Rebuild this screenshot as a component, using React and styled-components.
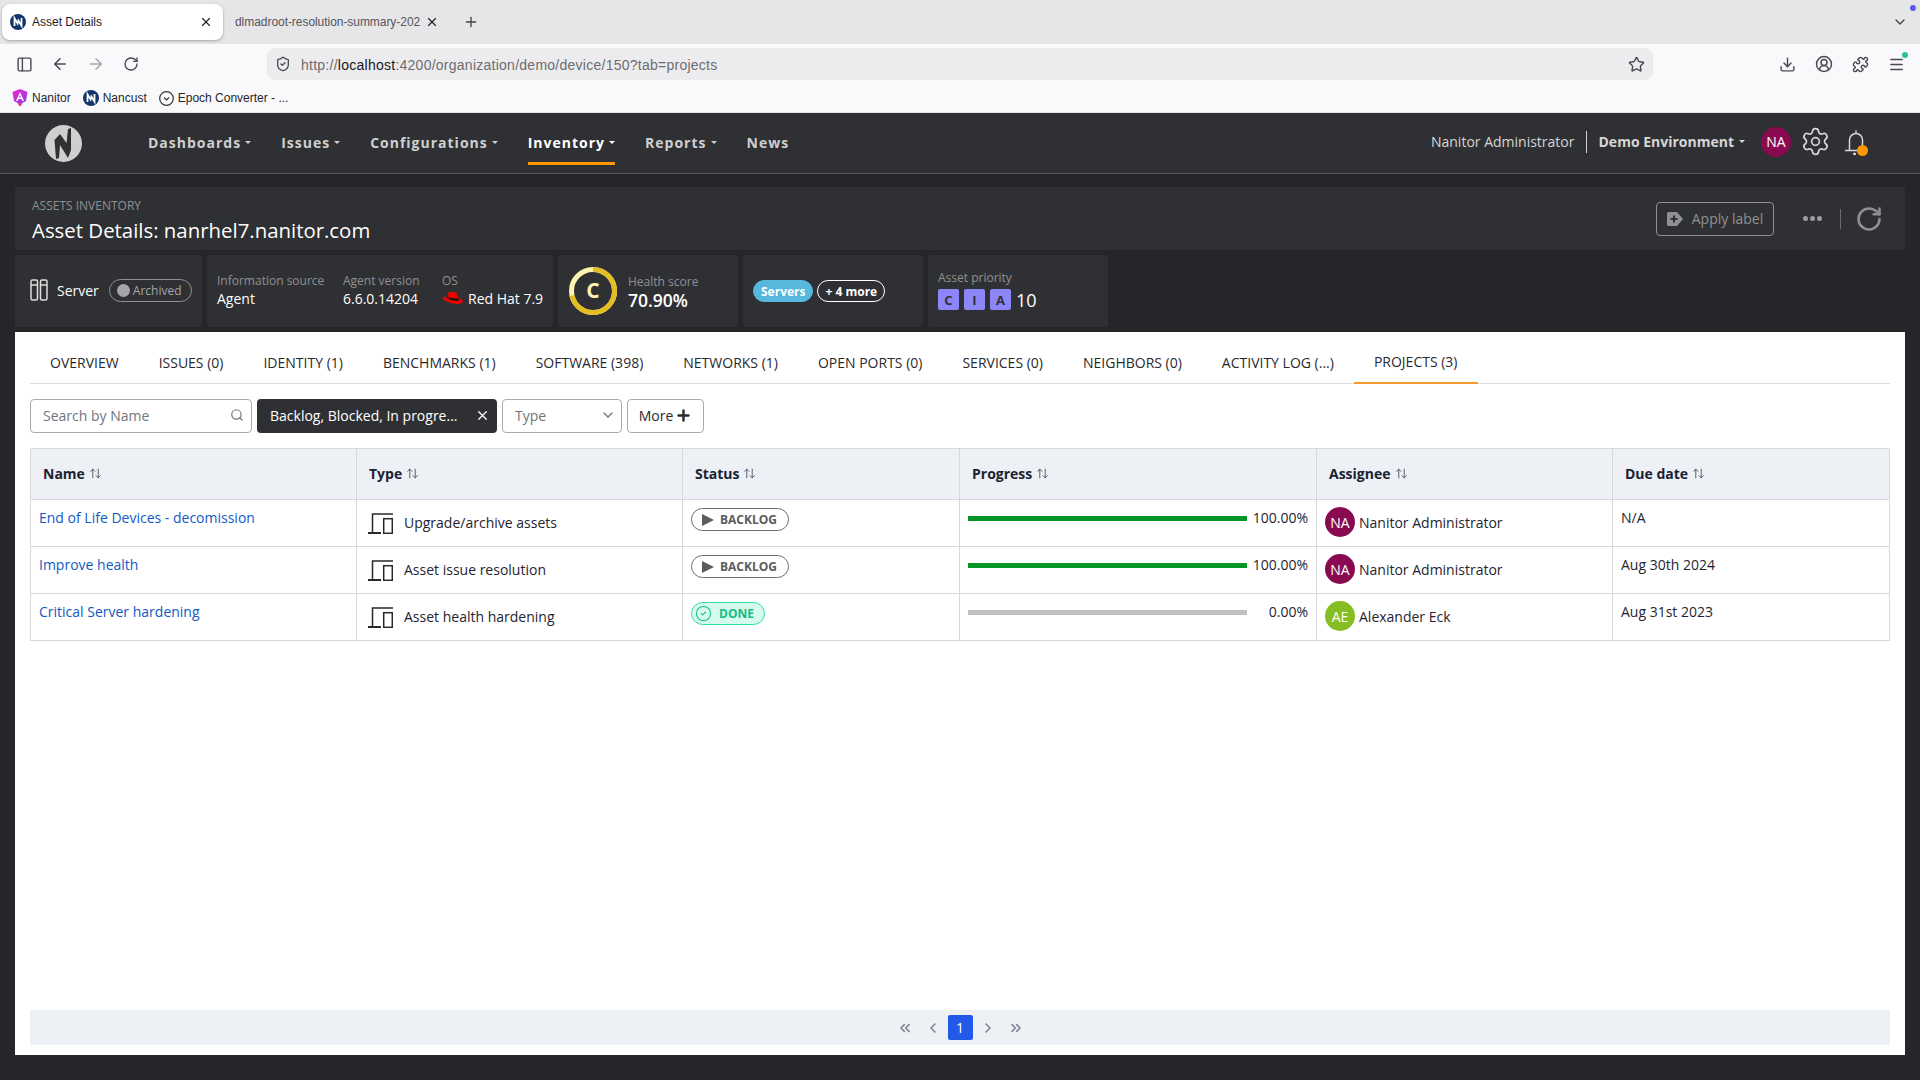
import React from 'react';
import styled, { createGlobalStyle } from 'styled-components';
import { X, Plus, PanelLeft, ArrowLeft, ArrowRight, RotateCw, ShieldCheck, Star, Download, CircleUserRound, Puzzle, Menu, ChevronDown, Search, Settings, ChevronsLeft, ChevronLeft, ChevronRight, ChevronsRight, CircleCheck, ArrowUpDown } from 'lucide-react';

const Global = createGlobalStyle`
  html, body { margin: 0; padding: 0; background: #25262a; }
  body { font-family: "Open Sans", "Noto Sans", sans-serif; font-size: 14px; color: #1f2430; }
  * { box-sizing: border-box; }
`;

const Page = styled.div`width: 1920px; height: 1080px; display: flex; flex-direction: column; overflow: hidden; background: #25262a;`;

const TabStrip = styled.div`height: 44px; background: #e6e6e9; display: flex; align-items: flex-start; padding: 4px 2px 0; position: relative; flex: none;`;
const BrowserTab = styled.div`
  width: ${p => p.$w}px; height: 36px; border-radius: 8px; display: flex; align-items: center; justify-content: center; padding: 0 10px 0 ${p => p.$active ? 8 : 12}px;
  gap: ${p => p.$active ? 6 : 0}px; font-size: 12px; font-family: "Liberation Sans", sans-serif;
  color: ${p => p.$active ? '#1b1b1f' : '#55555a'};
  background: ${p => p.$active ? '#fff' : 'transparent'};
  box-shadow: ${p => p.$active ? '0 1px 3px rgba(0,0,0,.3)' : 'none'};
`;
const TabTitle = styled.span`flex: 1; white-space: nowrap; letter-spacing: ${p => p.$tight ? -0.05 : 0}px;`;
const StripEnd = styled.div`margin-left: auto; padding: 10px 10px 0 0; color: #444; display: flex;`;
const NotifyDot = styled.span`position: absolute; top: 5px; right: 4px; width: 6px; height: 6px; border-radius: 50%; background: #5b5bf0;`;

const Toolbar = styled.div`height: 40px; background: #f9f9fb; display: flex; align-items: center; padding-left: 16px; flex: none; color: #4a4a50;`;
const ToolIcons = styled.div`display: flex; align-items: center; gap: 18px; width: 251px; flex: none;`;
const UrlBar = styled.div`width: 1386px; height: 32px; border-radius: 8px; background: #ececee; display: flex; align-items: center; padding: 0 8px; gap: 10px; flex: none; font-size: 14px; font-family: "Liberation Sans", sans-serif; color: #6c6c72;`;
const UrlText = styled.span`flex: 1; letter-spacing: .255px; padding-top: 1px; b { color: #18181b; font-weight: 400; }`;
const ToolRight = styled.div`display: flex; align-items: center; gap: 19px; margin-left: 126px; position: relative;`;
const GreenDot = styled.span`position: absolute; right: -3px; top: -3px; width: 6px; height: 6px; border-radius: 50%; background: #2cc39a;`;

const Bookmarks = styled.div`height: 29px; background: #f9f9fb; border-bottom: 1px solid #e4e4e6; display: flex; align-items: center; padding-left: 12px; gap: 12px; flex: none; font-size: 12px; font-family: "Liberation Sans", sans-serif; color: #26262b;`;
const Bookmark = styled.span`display: flex; align-items: center; gap: 4px;`;

const TopNav = styled.div`height: 61px; background: #2f3033; border-bottom: 1px solid #56575a; display: flex; align-items: center; padding-left: 45px; flex: none;`;
const NavLinks = styled.div`display: flex; margin-left: 66px; gap: 30px; height: 100%;`;
const NavLink = styled.div`
  display: flex; align-items: center; gap: 3px; height: 100%; position: relative; font-weight: 700; font-size: 14px; letter-spacing: 1px; padding-bottom: 2px;
  color: ${p => p.$active ? '#fff' : '#cfcfcf'};
  &::after { content: ''; display: ${p => p.$active ? 'block' : 'none'}; position: absolute; left: 0; right: 0; bottom: 8px; height: 3px; background: #ff9800; }
`;
const Caret = styled.span`width: 0; height: 0; border-left: 3.5px solid transparent; border-right: 3.5px solid transparent; border-top: 3.5px solid currentColor; margin-left: 1px;`;
const NavRight = styled.div`margin-left: auto; display: flex; align-items: center; color: #d6d6d6; padding: 0 49px 3px 0;`;
const UserName = styled.span`padding-right: 11px; border-right: 1px solid #d0d0d0; line-height: 22px;`;
const EnvName = styled.span`display: flex; align-items: center; gap: 4px; font-weight: 700; margin: 0 16px 0 12px;`;
const Avatar = styled.span`
  width: ${p => p.$s}px; height: ${p => p.$s}px; border-radius: 50%; background: ${p => p.$c}; color: #fff; display: inline-flex; align-items: center; justify-content: center; flex: none; font-size: 14px;
`;
const GearWrap = styled.span`display: flex; margin: 0 14px 0 9px;`;
const BellWrap = styled.span`position: relative; display: flex;`;
const BellDot = styled.span`position: absolute; left: 12px; top: 16px; width: 11px; height: 11px; border-radius: 50%; background: #ff9800;`;

const Main = styled.div`flex: 1; padding: 13px 15px 25px; display: flex; flex-direction: column; min-height: 0;`;
const HeaderPanel = styled.div`height: 63px; background: #2f3033; display: flex; align-items: center; justify-content: space-between; padding: 0 22px 0 17px; flex: none;`;
const TitleBlock = styled.div`padding-top: 4px;`;
const Crumb = styled.div`font-size: 12px; color: #8f9093; line-height: 16px;`;
const Title = styled.div`font-size: 20.4px; color: #fff; line-height: 28px; font-weight: 500; margin-top: 2px;`;
const Actions = styled.div`display: flex; align-items: center; color: #8f9093;`;
const ApplyBtn = styled.div`width: 118px; height: 34px; border: 1px solid #8f9093; border-radius: 4px; display: flex; align-items: center; justify-content: center; gap: 9px; margin-right: 29px;`;
const Dots = styled.span`display: flex; gap: 2px; span { width: 5px; height: 5px; border-radius: 50%; background: #9a9b9e; }`;
const VSep = styled.span`width: 1px; height: 20px; background: #6a6b6e; margin: 0 14px 0 18px;`;

const Cards = styled.div`display: flex; gap: 5px; margin-top: 5px; height: 72px; flex: none;`;
const Card = styled.div`width: ${p => p.$w}px; background: #2f3033; border-radius: 3px; display: flex; align-items: center; padding: 0 0 ${p => p.$pb ?? 0}px ${p => p.$pl ?? 10}px; color: #fff; gap: ${p => p.$gap ?? 0}px;`;
const Field = styled.div`display: flex; flex-direction: column; width: ${p => p.$w}px; flex: none;`;
const FieldLabel = styled.span`font-size: 12px; color: #8f9093; line-height: ${p => p.$lh ?? 18}px; white-space: nowrap;`;
const FieldValue = styled.span`font-size: 14px; color: #fff; line-height: 20px; margin-top: -1px; display: flex; align-items: center; gap: 5px; white-space: nowrap;`;
const ServerLabel = styled.span`margin-left: 9px;`;
const ArchivedPill = styled.span`width: 83px; height: 23px; border: 1px solid #8f9093; border-radius: 12px; display: flex; align-items: center; gap: 3px; padding-left: 7px; font-size: 12px; color: #a5a6a8; margin-left: 10px; i { width: 13px; height: 13px; border-radius: 50%; background: #a5a6a8; }`;
const HealthText = styled.span`font-size: 17.5px; font-weight: 600; color: #fff; line-height: 20px; margin-top: -1px;`;
const Tag = styled.span`height: 22px; border-radius: 11px; padding: 0 7px; display: inline-flex; align-items: center; font-size: 12px; font-weight: 700; color: #fff; background: ${p => p.$fill ? '#55b8dc' : 'transparent'}; border: 1px solid ${p => p.$fill ? '#55b8dc' : '#fff'};`;
const Cia = styled.div`display: flex; align-items: center; gap: 5px; margin-top: 2px;`;
const CiaBox = styled.span`width: 21px; height: 21px; border-radius: 2px; background: #8c86f8; color: #2f3033; font-size: 13px; font-weight: 700; display: flex; align-items: center; justify-content: center;`;
const CiaNum = styled.span`font-size: 18px;`;

const Content = styled.div`flex: 1; background: #fff; margin-top: 5px; padding: 0 15px 10px; display: flex; flex-direction: column; min-height: 0;`;
const Tabs = styled.div`height: 52px; border-bottom: 1px solid #dcdcdc; display: flex; flex: none;`;
const TabItem = styled.div`
  padding: 8px 20px 0; display: flex; align-items: center; color: #2a2a2e; white-space: nowrap; height: 52px;
  border-bottom: ${p => p.$active ? '2px solid #f39a2d' : 'none'};
`;
const Filters = styled.div`display: flex; gap: 5px; margin-top: 15px; height: 34px; flex: none;`;
const SearchBox = styled.div`width: 222px; border: 1px solid #a9abaf; border-radius: 4px; display: flex; align-items: center; justify-content: space-between; padding: 0 7px 2px 12px; color: #72757a;`;
const StatusFilter = styled.div`width: 240px; background: #2f3033; border-radius: 4px; color: #fff; display: flex; align-items: center; justify-content: space-between; padding: 0 7px 2px 13px;`;
const TypeFilter = styled.div`width: 120px; border: 1px solid #a9abaf; border-radius: 4px; display: flex; align-items: center; justify-content: space-between; padding: 0 5px 2px 12px; color: #72757a;`;
const MoreBtn = styled.div`width: 77px; border: 1px solid #a9abaf; border-radius: 4px; display: flex; align-items: center; justify-content: center; gap: 2px; color: #2a2a2e; padding-bottom: 1px;`;

const Table = styled.table`width: 1859px; margin-top: 15px; border-collapse: collapse; table-layout: fixed; flex: none;`;
const Th = styled.th`height: 51px; background: #edf0f5; border: 1px solid #d6d8db; text-align: left; padding: 0 12px 2px; font-weight: 700; color: #1a2233; font-size: 14px;`;
const SortWrap = styled.span`display: inline-flex; align-items: center; gap: 4px;`;
const Td = styled.td`height: 47px; border: 1px solid #d6d8db; padding: ${p => p.$top ? '8px 8px 0' : '0 8px 2px'}; vertical-align: ${p => p.$top ? 'top' : 'middle'}; color: #1f2430;`;
const NameLink = styled.a`color: #1259c3; text-decoration: none; line-height: 20px;`;
const Row = styled.div`display: flex; align-items: center; gap: ${p => p.$gap}px;`;
const DeviceWrap = styled.span`display: flex; margin: 3px 0 0 3px;`;
const StatusPill = styled.span`
  height: 23px; border-radius: 12px; display: inline-flex; align-items: center; font-size: 12px; font-weight: 700; vertical-align: top;
  gap: ${p => p.$done ? 7 : 6}px; padding: 0 ${p => p.$done ? 10 : 11}px 0 ${p => p.$done ? 3 : 10}px;
  color: ${p => p.$done ? '#0fbf83' : '#5a5c60'};
  background: ${p => p.$done ? '#d6fbee' : 'transparent'};
  border: 1px solid ${p => p.$done ? '#2ce0a5' : '#6b6e73'};
`;
const PlayMark = styled.span`width: 0; height: 0; border-left: 12px solid #5a5c60; border-top: 6px solid transparent; border-bottom: 6px solid transparent;`;
const Progress = styled.div`display: flex; align-items: center; justify-content: space-between;`;
const Track = styled.div`width: 279px; height: 5px; background: #c0c0c0; margin-top: 1px;`;
const Fill = styled.div`height: 100%; background: #059526;`;

const Spacer = styled.div`flex: 1;`;
const Pager = styled.div`height: 35px; background: #edf0f5; display: flex; align-items: center; justify-content: center; gap: 12px; flex: none; color: #7d8596;`;
const PageBtn = styled.span`width: 25px; height: 25px; border-radius: 2px; background: #2259e8; color: #fff; display: flex; align-items: center; justify-content: center; margin: 0 -5px;`;

const NFav = ({ s = 16 }) => (
  <svg width={s} height={s} viewBox="0 0 16 16" style={{ flex: 'none' }}>
    <circle cx="8" cy="8" r="8" fill="#12366b" />
    <path d="M4.500 12V4.200L7.600 9.500 8.400 6.500 11.500 11.800V4" fill="none" stroke="#fff" strokeWidth="1.800" />
  </svg>
);
const AngularFav = () => (
  <svg width="16" height="18" viewBox="0 0 16 18">
    <defs>
      <linearGradient id="ang" x1="0" y1="0" x2="1" y2="1">
        <stop offset="0" stopColor="#f023c8" /><stop offset="1" stopColor="#8a3ff0" />
      </linearGradient>
    </defs>
    <path d="M8 0 15.500 3 14 12 8 15.500 2 12 .5 3Z" fill="url(#ang)" />
    <path d="M5.500 14.500H10.500L8 17.500Z" fill="#e8304a" />
    <path d="M8 3 12 12H10.400L9.600 10H6.400L5.600 12H4ZM7 8.600H9L8 6Z" fill="#fff" />
  </svg>
);
const Logo = () => (
  <svg width="37" height="37" viewBox="0 0 37 37">
    <circle cx="18.500" cy="18.500" r="18.500" fill="#cfcfcf" />
    <path d="M11 34 9.500 15 15 9 21.500 18 23 4 26 3V25L23 33 15 20 14 33Z" fill="#2f3033" />
  </svg>
);
const BellIcon = () => (
  <svg width="26" height="26" viewBox="0 0 26 26" fill="none" stroke="#d6d6d6" strokeWidth="1.500">
    <path d="M4.500 21V11a6.500 6.500 0 0 1 13 0v5" />
    <path d="M0 21.500H13M11 1.500V4.500" />
    <circle cx="9.500" cy="25" r=".8" fill="#d6d6d6" />
  </svg>
);
const ServerIcon = () => (
  <svg width="18" height="22" viewBox="0 0 18 22" fill="none" stroke="#dcdcdc" strokeWidth="1.500">
    <rect x="1" y="1" width="6.500" height="20" rx="1.500" /><rect x="10.500" y="1" width="6.500" height="20" rx="1.500" />
    <path d="M1 6h6.500M10.500 6H17" />
  </svg>
);
const RedHat = () => (
  <svg width="21" height="16" viewBox="0 0 21 16">
    <path d="M5 7 6.500 2C7 .6 8.500 .4 10 .9c1.500.5 3-.6 4.200.6L16 6.500C18 7.300 21 8.500 20.700 10.600 20.300 13.500 15 13.500 11 12.500 6 11.300 .5 9 .5 7 .5 5.800 2 5.500 3.500 6Z" fill="#e00" />
    <path d="M5 7C8 9 13 10.500 17 9.500L16.500 7.200C13 8 8 7 5.300 5.800Z" fill="#111" />
  </svg>
);
const Ring = () => (
  <svg width="48" height="48" viewBox="0 0 48 48">
    <circle cx="24" cy="24" r="21.500" fill="none" stroke="#fdf3b0" strokeWidth="5" />
    <circle cx="24" cy="24" r="21.500" fill="none" stroke="#e2bd23" strokeWidth="5" strokeDasharray="96 135" transform="rotate(-90 24 24)" />
    <text x="24" y="31" textAnchor="middle" fontSize="21" fontWeight="700" fill="#fdf3b0" fontFamily="Open Sans">C</text>
  </svg>
);
const LabelPlus = () => (
  <svg width="16" height="14" viewBox="0 0 16 14">
    <path d="M1.500 0H10L16 7 10 14H1.500A1.500 1.500 0 0 1 0 12.500V1.500A1.500 1.500 0 0 1 1.500 0Z" fill="#8f9093" />
    <path d="M7 3.500V10.500M3.500 7H10.500" stroke="#2f3033" strokeWidth="2" />
  </svg>
);
const DeviceIcon = () => (
  <svg width="25" height="21" viewBox="0 0 25 21" fill="none" stroke="#26282d">
    <path d="M4.500 20V1H25" strokeWidth="1.500" />
    <path d="M0 20H13" strokeWidth="2" />
    <rect x="15.700" y="5.700" width="8.600" height="14.600" strokeWidth="1.500" />
  </svg>
);
const Sort = () => <ArrowUpDown size={13} strokeWidth={1.6} color="#444b58" />;

const EpochIcon = () => (
  <svg width="15" height="15" viewBox="0 0 15 15" fill="none" stroke="#333" strokeWidth="1.200">
    <circle cx="7.500" cy="7.500" r="6.800" /><path d="M5 6.500 7.500 9 10 6.500" />
  </svg>
);

const rows = [
  { name: 'End of Life Devices - decomission', type: 'Upgrade/archive assets', done: false, pct: 100, user: 'Nanitor Administrator', ini: 'NA', color: '#8a0a52', due: 'N/A' },
  { name: 'Improve health', type: 'Asset issue resolution', done: false, pct: 100, user: 'Nanitor Administrator', ini: 'NA', color: '#8a0a52', due: 'Aug 30th 2024' },
  { name: 'Critical Server hardening', type: 'Asset health hardening', done: true, pct: 0, user: 'Alexander Eck', ini: 'AE', color: '#86bd23', due: 'Aug 31st 2023' },
];
const tabs = ['OVERVIEW', 'ISSUES (0)', 'IDENTITY (1)', 'BENCHMARKS (1)', 'SOFTWARE (398)', 'NETWORKS (1)', 'OPEN PORTS (0)', 'SERVICES (0)', 'NEIGHBORS (0)', 'ACTIVITY LOG (...)', 'PROJECTS (3)'];
const nav = ['Dashboards', 'Issues', 'Configurations', 'Inventory', 'Reports', 'News'];
const cols = [326, 326, 277, 357, 296, 277];
const heads = ['Name', 'Type', 'Status', 'Progress', 'Assignee', 'Due date'];

export default function App() {
  return (
    <Page>
      <Global />
      <TabStrip>
        <BrowserTab $active $w={221}><NFav /><TabTitle>Asset Details</TabTitle><X size={14} color="#222" /></BrowserTab>
        <BrowserTab $w={226}><TabTitle $tight>dlmadroot-resolution-summary-202</TabTitle><X size={14} color="#222" /></BrowserTab>
        <BrowserTab $w={42}><Plus size={16} color="#444" /></BrowserTab>
        <StripEnd><ChevronDown size={16} /></StripEnd>
        <NotifyDot />
      </TabStrip>
      <Toolbar>
        <ToolIcons>
          <PanelLeft size={17} /><ArrowLeft size={18} /><ArrowRight size={18} color="#a5a5a9" /><RotateCw size={16} />
        </ToolIcons>
        <UrlBar>
          <ShieldCheck size={16} color="#4a4a50" />
          <UrlText>http://<b>localhost</b>:4200/organization/demo/device/150?tab=projects</UrlText>
          <Star size={17} color="#4a4a50" />
        </UrlBar>
        <ToolRight>
          <Download size={17} /><CircleUserRound size={18} /><Puzzle size={17} />
          <Menu size={17} /><GreenDot />
        </ToolRight>
      </Toolbar>
      <Bookmarks>
        <Bookmark><AngularFav />Nanitor</Bookmark>
        <Bookmark><NFav />Nancust</Bookmark>
        <Bookmark><EpochIcon />Epoch Converter - ...</Bookmark>
      </Bookmarks>
      <TopNav>
        <Logo />
        <NavLinks>
          {nav.map(n => (
            <NavLink key={n} $active={n === 'Inventory'}>{n}{n !== 'News' && <Caret />}</NavLink>
          ))}
        </NavLinks>
        <NavRight>
          <UserName>Nanitor Administrator</UserName>
          <EnvName>Demo Environment <Caret /></EnvName>
          <Avatar $s={30} $c="#8a0a52">NA</Avatar>
          <GearWrap><Settings size={31} strokeWidth={1.300} /></GearWrap>
          <BellWrap><BellIcon /><BellDot /></BellWrap>
        </NavRight>
      </TopNav>
      <Main>
        <HeaderPanel>
          <TitleBlock>
            <Crumb>ASSETS INVENTORY</Crumb>
            <Title>Asset Details: nanrhel7.nanitor.com</Title>
          </TitleBlock>
          <Actions>
            <ApplyBtn><LabelPlus />Apply label</ApplyBtn>
            <Dots><span /><span /><span /></Dots>
            <VSep />
            <RotateCw size={28} strokeWidth={2.200} />
          </Actions>
        </HeaderPanel>
        <Cards>
          <Card $w={187} $pl={15} $pb={2}>
            <ServerIcon />
            <ServerLabel>Server</ServerLabel>
            <ArchivedPill><i />Archived</ArchivedPill>
          </Card>
          <Card $w={346} $pb={2}>
            <Field $w={126}><FieldLabel>Information source</FieldLabel><FieldValue>Agent</FieldValue></Field>
            <Field $w={99}><FieldLabel>Agent version</FieldLabel><FieldValue>6.6.0.14204</FieldValue></Field>
            <Field $w={110}><FieldLabel>OS</FieldLabel><FieldValue><RedHat />Red Hat 7.9</FieldValue></Field>
          </Card>
          <Card $w={180} $pl={11} $gap={11}>
            <Ring />
            <Field $w={100}><FieldLabel $lh={19}>Health score</FieldLabel><HealthText>70.90%</HealthText></Field>
          </Card>
          <Card $w={180} $gap={4}><Tag $fill>Servers</Tag><Tag>+ 4 more</Tag></Card>
          <Card $w={180} $pb={2}>
            <Field $w={160}>
              <FieldLabel $lh={17}>Asset priority</FieldLabel>
              <Cia><CiaBox>C</CiaBox><CiaBox>I</CiaBox><CiaBox>A</CiaBox><CiaNum>10</CiaNum></Cia>
            </Field>
          </Card>
        </Cards>
        <Content>
          <Tabs>
            {tabs.map(t => <TabItem key={t} $active={t.startsWith('PROJECTS')}>{t}</TabItem>)}
          </Tabs>
          <Filters>
            <SearchBox>Search by Name<Search size={14} /></SearchBox>
            <StatusFilter>Backlog, Blocked, In progre...<X size={15} /></StatusFilter>
            <TypeFilter>Type<ChevronDown size={16} /></TypeFilter>
            <MoreBtn>More<Plus size={17} strokeWidth={3.400} /></MoreBtn>
          </Filters>
          <Table>
            <colgroup>{cols.map((c, i) => <col key={i} style={{ width: c }} />)}</colgroup>
            <thead>
              <tr>{heads.map(h => <Th key={h}><SortWrap>{h}<Sort /></SortWrap></Th>)}</tr>
            </thead>
            <tbody>
              {rows.map(r => (
                <tr key={r.name}>
                  <Td $top><NameLink>{r.name}</NameLink></Td>
                  <Td><Row $gap={11}><DeviceWrap><DeviceIcon /></DeviceWrap>{r.type}</Row></Td>
                  <Td $top>
                    <StatusPill $done={r.done}>
                      {r.done ? <CircleCheck size={17} strokeWidth={1.500} /> : <PlayMark />}
                      {r.done ? 'DONE' : 'BACKLOG'}
                    </StatusPill>
                  </Td>
                  <Td $top>
                    <Progress>
                      <Track><Fill style={{ width: `${r.pct}%` }} /></Track>
                      <span>{r.pct.toFixed(2)}%</span>
                    </Progress>
                  </Td>
                  <Td><Row $gap={4}><Avatar $s={30} $c={r.color}>{r.ini}</Avatar>{r.user}</Row></Td>
                  <Td $top>{r.due}</Td>
                </tr>
              ))}
            </tbody>
          </Table>
          <Spacer />
          <Pager>
            <ChevronsLeft size={16} strokeWidth={2.400} /><ChevronLeft size={16} strokeWidth={2.400} /><PageBtn>1</PageBtn><ChevronRight size={16} strokeWidth={2.400} /><ChevronsRight size={16} strokeWidth={2.400} />
          </Pager>
        </Content>
      </Main>
    </Page>
  );
}
